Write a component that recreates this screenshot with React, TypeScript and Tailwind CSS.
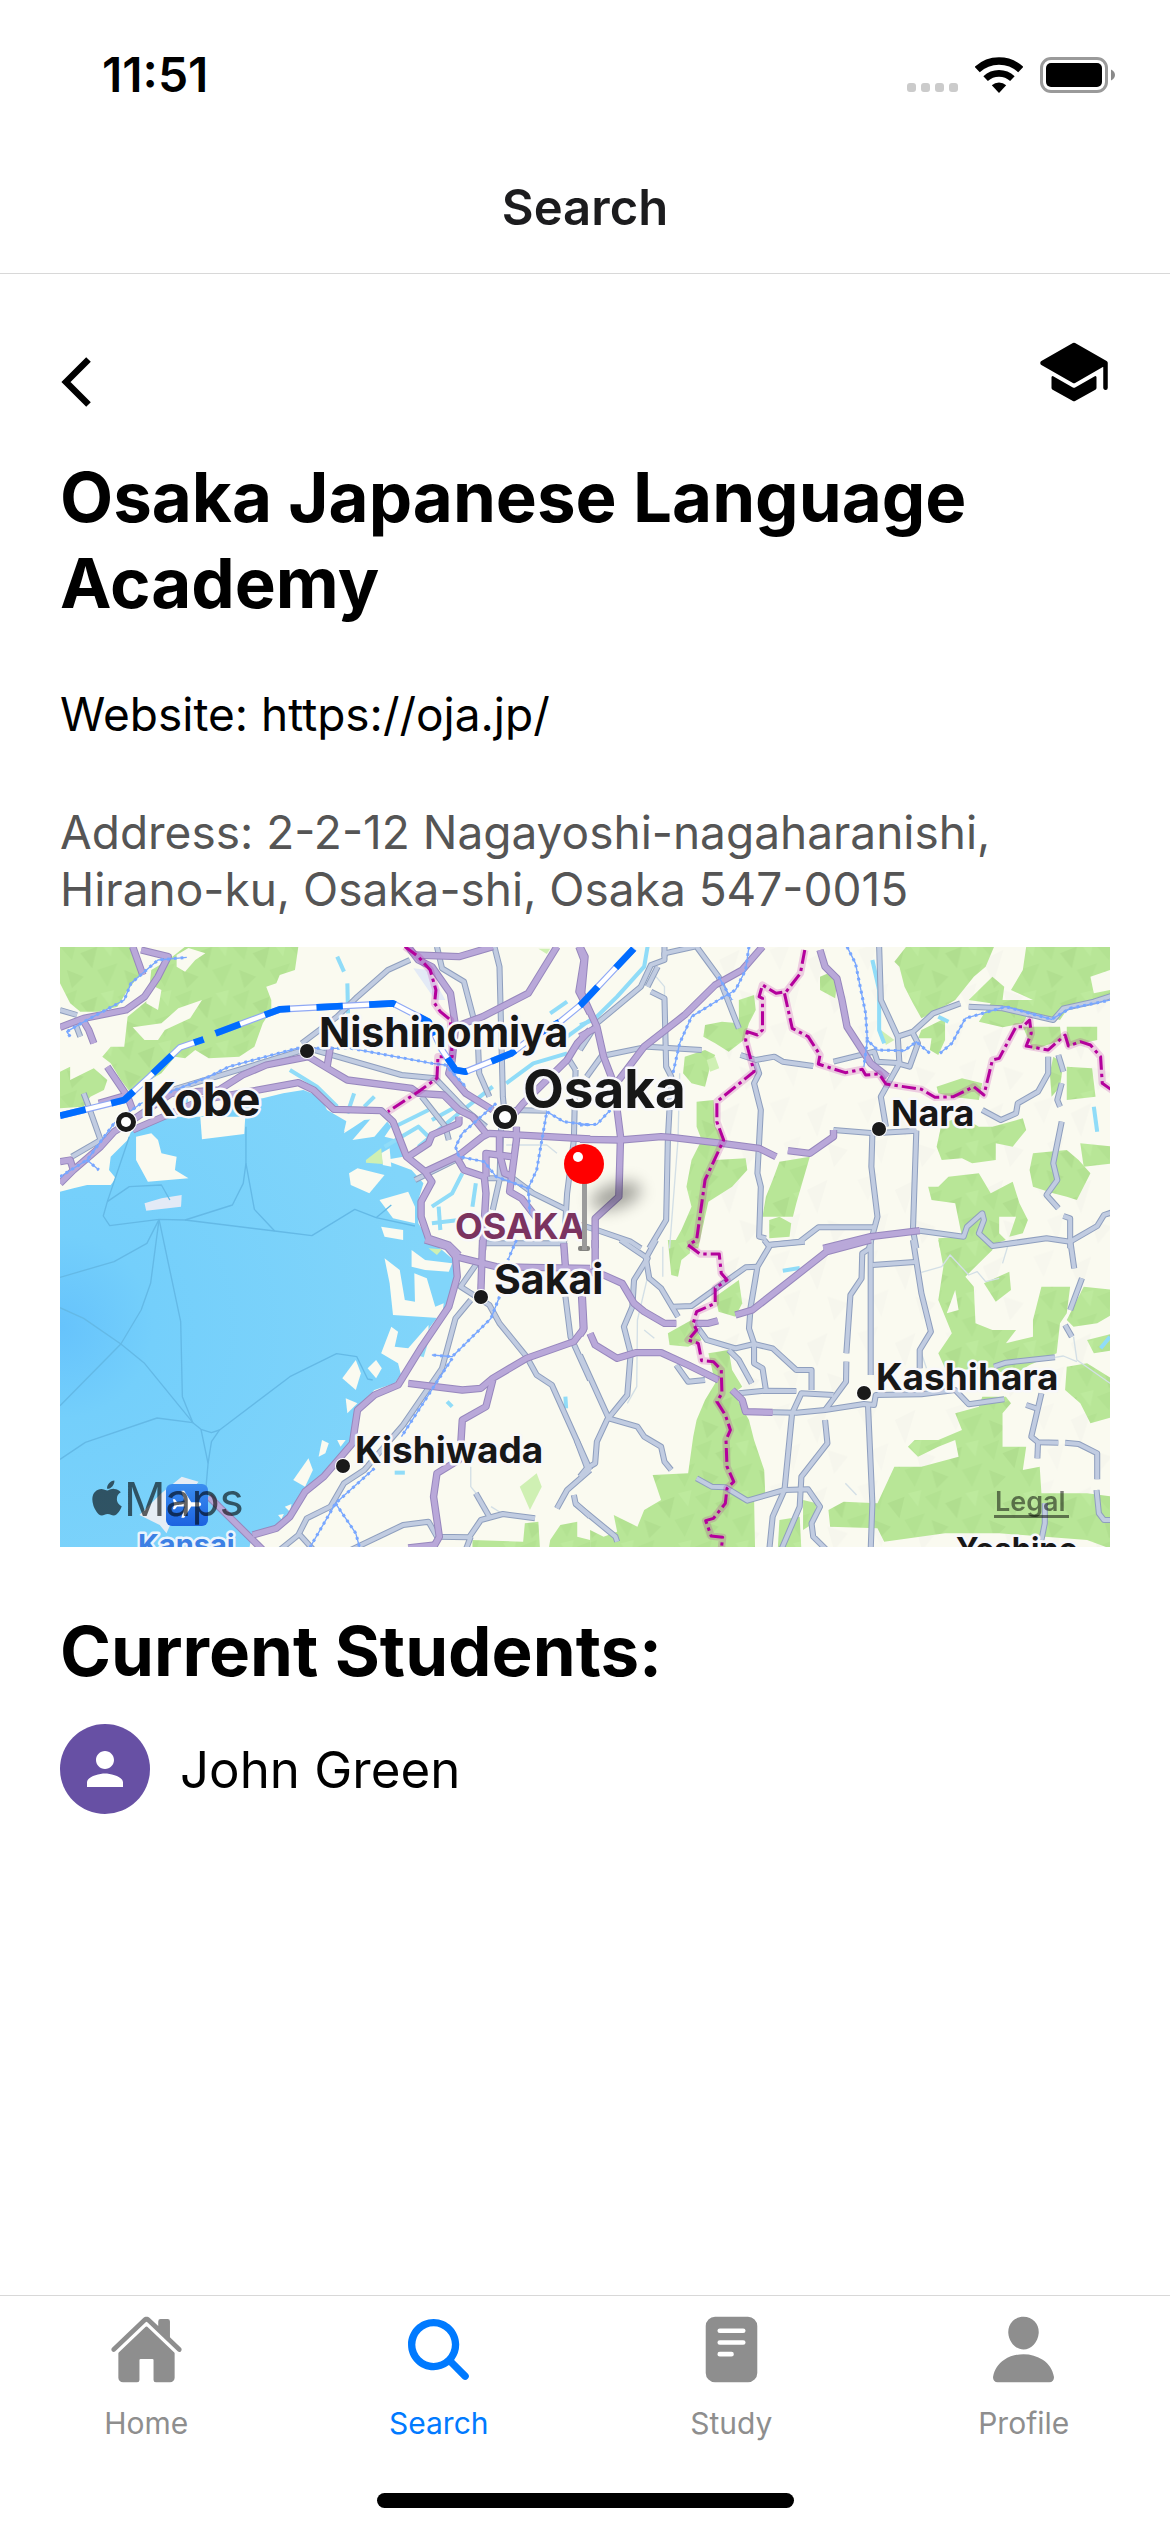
import React from "react";
import { IoHome, IoSearch, IoReader, IoPerson, IoSchool } from "react-icons/io5";
import { MdPerson, MdFlight } from "react-icons/md";
import { FaApple } from "react-icons/fa";

/* Map geometry is split in four tiles: nw, ne, sw, se. */
type Tile = "nw" | "ne" | "sw" | "se";
type Tiles = Record<Tile, string[]>;

const TILE_ORIGIN: Record<Tile, string> = {
  nw: "translate(0 0)",
  ne: "translate(1538 0)",
  sw: "translate(0 900)",
  se: "translate(1538 900)",
};
const TILES: Tile[] = ["nw", "ne", "sw", "se"];

const SEA =
  "0,755 40,745 80,735 150,735 165,715 145,690 150,650 200,600 210,575 300,530 415,530 480,510 530,480 600,475 660,460 720,450 770,470 790,510 850,545 840,580 870,560 900,540 960,535 980,560 960,590 1000,600 1015,650 960,660 1040,690 1075,730 1060,780 1060,850 1090,900 1130,930 1165,960 1170,1010 1140,1100 1095,1160 1060,1230 1010,1300 990,1330 930,1350 880,1400 870,1480 845,1530 800,1570 760,1640 720,1660 690,1720 640,1765 570,1780 560,1824 0,1824";

const WOODS: Tiles = {
  nw: [
    "0,20 215,20 240,100 200,150 170,200 110,215 60,215 30,190 0,130",
    "370,20 705,20 695,90 650,105 640,130 610,140 625,180 625,210 600,250 575,320 530,350 440,355 400,330 370,355 340,350 300,400 250,430 210,460 180,420 150,370 125,350 150,320 190,320 200,230 260,180 270,90 320,60",
    "0,395 30,380 30,420 70,400 100,385 140,420 130,450 90,470 70,500 0,505",
  ],
  ne: [
    "930,65 965,20 1225,20 1200,80 1165,110 1110,180 1060,210 1010,235 985,190 960,140 945,80",
    "1320,20 1580,20 1580,160 1510,190 1440,210 1420,240 1330,215 1310,250 1250,262 1180,245 1215,190 1150,180 1220,110 1255,140 1250,180 1340,180 1275,150 1310,90",
    "470,180 515,165 520,210 500,250 485,300 440,335 400,310 365,290 370,255 420,245 470,250",
    "710,110 745,95 760,130 755,175 710,150",
    "310,350 370,330 400,345 385,380 370,440 330,430 305,400",
    "345,485 395,480 400,560 430,600 400,660 490,655 495,690 450,740 380,785 370,830 350,925 270,925 300,870 330,800 315,740 330,660 360,600 345,560",
    "590,665 680,650 660,720 640,790 630,830 560,830 540,830 550,770 570,720",
    "560,840 590,830 625,850 620,890 560,895",
    "1070,550 1130,530 1180,560 1220,560 1310,535 1320,570 1280,620 1230,610 1230,660 1160,670 1130,655 1070,660 1055,620",
    "1030,740 1060,740 1090,710 1180,700 1215,760 1280,725 1300,790 1325,840 1310,880 1270,890 1290,830 1240,830 1240,880 1260,900 1190,925 1065,925 1060,895 1130,890 1120,840 1110,790 1040,780",
    "1055,440 1130,415 1190,430 1180,480 1100,470 1060,460",
    "1340,640 1440,630 1475,660 1510,700 1470,780 1440,770 1400,760 1340,740 1330,690",
    "1480,610 1580,620 1580,670 1490,680",
    "1440,380 1515,385 1525,470 1440,480",
    "1400,350 1430,370 1420,440 1395,470 1390,400",
    "1010,270 1080,235 1080,300 1060,345 1035,330 1040,295 1000,295",
    "1310,260 1420,260 1425,300 1340,330",
    "1440,260 1530,260 1530,300 1440,320",
  ],
  sw: [
    "1220,900 1370,905 1375,850 1415,845 1420,930 1220,930",
    "1450,900 1480,855 1530,845 1530,890 1568,900 1568,930 1445,930",
  ],
  se: [
    "260,0 325,0 325,40 300,60 290,110 270,105",
    "400,170 470,120 480,190 460,230 410,215",
    "380,340 440,330 450,390 480,440 455,460 500,540 515,600 545,690 548,760 515,770 518,930 30,930 30,870 70,890 110,875 100,825 170,860 190,810 240,780 215,705 320,700 335,590 345,540 370,480 400,430",
    "1060,0 1225,0 1220,30 1140,110 1165,140 1170,250 1220,270 1290,270 1260,310 1340,290 1340,240 1365,140 1450,140 1440,220 1420,250 1410,340 1330,375 1290,400 1170,390 1080,385 1060,340 1100,280 1060,180 1075,80",
    "1195,130 1270,95 1275,150 1230,185",
    "1490,140 1580,150 1580,220 1530,250 1460,260 1440,240",
    "1500,300 1580,280 1580,330 1520,340",
    "1440,380 1500,370 1580,420 1580,530 1510,550 1480,490 1435,450",
    "1110,520 1180,500 1190,470 1260,470 1275,490 1250,520 1250,620 1320,620 1310,690 1360,680 1365,760 1500,760 1580,770 1580,930 1500,900 1240,880 1080,880 900,905 880,865 740,860 735,810 780,785 880,790 930,680 1010,680 1120,650 1110,600 1060,620 1000,650 970,620 990,600 1060,600 1130,570",
    "590,840 650,830 655,930 585,930",
    "660,780 700,790 690,850 660,870",
    "260,280 330,240 360,300 320,320 265,315",
  ],
};

const CLEARINGS: Tiles = {
  nw: [
    "215,262 300,250 350,205 420,180 385,235 310,270 290,300 250,300",
    "260,130 300,150 290,210 255,190",
    "345,45 380,24 430,40 400,60 370,95 345,80",
    "225,590 270,580 290,600 300,640 345,650 340,690 380,715 260,725 225,660",
    "415,530 548,530 545,582 420,598",
    "855,700 880,685 960,705 915,760 860,735",
    "950,860 1015,870 1015,900 960,890",
    "945,780 1030,755 1050,800 1050,850 985,835",
    "865,600 950,500 980,530 930,590",
    "840,575 850,530 880,500 890,520",
    "950,640 975,625 980,680 955,675",
  ],
  ne: ["1510,110 1568,90 1568,150 1520,160"],
  sw: [
    "960,55 1005,90 1020,180 1050,185 1048,100 1085,115 1110,200 1135,190 1130,235 985,225 975,130",
    "1040,30 1080,60 1160,70 1150,95 1080,90 1040,80",
    "980,260 1000,275 990,320 1030,325 1090,255 1090,290 1050,360 1010,410 1000,370 950,340",
    "835,415 875,360 890,400 875,450",
    "910,385 935,360 952,385 935,415",
    "845,475 880,490 850,520",
    "765,650 775,600 795,610 785,640",
    "690,720 735,655 748,690 725,740",
    "665,800 685,792 680,815",
    "645,825 662,822 655,838",
    "820,600 845,600 830,620",
  ],
  se: ["1085,220 1110,150 1120,210"],
};

const PARKS: Tiles = {
  nw: ["905,660 950,625 955,672 905,668", "1415,26 1450,26 1440,42"],
  ne: ["375,360 400,350 412,385 385,395", "890,270 930,300 905,315"],
  sw: ["1360,740 1410,700 1425,740 1390,810", "1090,25 1130,28 1115,45"],
  se: [],
};

const CANALS: Tiles = {
  nw: [
    "1060,620 1180,520 1280,440",
    "1100,540 1190,490",
    "1320,430 1400,370 1500,340",
    "960,620 1060,560 1100,600",
    "1100,800 1160,760 1190,700",
    "1230,730 1220,800",
    "1100,850 1180,840",
    "820,50 840,95",
    "850,130 852,220",
    "990,560 1090,510",
    "1450,220 1500,185",
    "870,460 850,520",
    "930,470 900,500",
    "680,390 760,440 820,500",
    "1500,290 1568,240",
    "370,450 375,500",
    "1120,800 1125,870",
  ],
  ne: ["200,20 190,80 110,170 40,240 0,255", "865,60 885,150 885,270 900,310", "1520,500 1530,575", "1060,230 1090,245"],
  sw: ["1145,485 1160,500", "990,698 1020,698", "1495,470 1497,505", "1085,300 1070,350"],
  se: ["600,92 650,84", "1540,325 1568,290"],
};

const FERRIES: Tiles = {
  nw: [
    "205,590 140,785 128,828 147,857 293,838 370,840 510,795 542,730 550,670 550,560",
    "140,785 205,740 300,735 325,780",
    "370,840 635,873 745,887 872,808 935,833 1050,858",
    "550,670 575,808 635,873",
    "935,833 980,795",
    "293,838 257,910 160,965 0,1012",
    "293,838 268,1030 240,1110 180,1212 0,1397",
    "293,838 357,1145 362,1370 393,1448 417,1468 448,1478 472,1470 680,1310 818,1241 878,1250 910,1317 925,1320",
    "0,1103 70,1135 180,1212 250,1270 393,1448 287,1434 75,1507 0,1558",
    "417,1468 438,1570 432,1640",
    "472,1470 448,1505 438,1570",
  ],
  ne: [],
  sw: [],
  se: [],
};

const HIGHWAYS: Tiles = {
  nw: [
    "215,20 245,105",
    "240,30 320,50 290,110 250,170 195,210 70,235 0,262",
    "65,235 85,270 100,310",
    "140,380 200,470 215,510",
    "115,490 200,465",
    "0,665 30,660 40,690",
    "0,730 40,690 120,620 160,575 215,540 330,460 470,450 540,405 610,375 735,350 800,390 850,420 1040,445 1060,460 1135,465 1180,510 1220,530 1260,580",
    "215,570 420,480 560,455 705,428 750,450 810,508 950,512 985,545 1025,650 1080,695 1100,725 1068,785 1068,830 1090,895 1150,915 1180,945",
    "1030,650 1090,610 1100,585 1180,550 1180,530",
    "1080,695 1175,650 1250,590 1270,580 1568,597",
    "1175,655 1195,690 1255,710 1260,760 1250,930",
    "1260,710 1260,640 1335,650",
    "1300,580 1300,640 1315,700 1340,710",
    "1350,560 1350,600 1330,755 1365,775 1430,860",
    "1030,20 1060,60 1100,80 1155,160 1170,260 1160,360 1150,400 1200,460 1280,510",
    "1050,45 1180,50 1280,20",
    "1470,20 1385,160 1250,230 1170,260",
    "1535,20 1550,60 1535,155 1568,220",
    "1568,270 1530,310 1500,360 1370,490 1345,520",
    "790,380 800,320",
  ],
  ne: [
    "0,20 15,50 5,160 50,260 70,350 100,430 120,590 115,770 45,835 45,925",
    "540,20 480,90 400,135 310,225 190,320 115,420",
    "0,290 45,265",
    "710,30 725,80 760,115 775,180 790,260 860,370 910,410",
    "0,598 120,600 240,590 270,592 420,610 530,625 580,650",
    "615,632 680,640 750,590 750,570",
    "720,925 860,890 1005,872",
  ],
  sw: [
    "1080,0 1145,20 1170,50 1290,80 1390,82 1568,85",
    "1170,50 1175,110 1150,200 1070,320 1000,435 930,465 880,510 865,610 780,710 725,755 680,830 640,865 570,885",
    "1250,0 1245,150",
    "1490,10 1495,80",
    "1545,170 1550,265 1520,305 1380,355 1280,415 1245,445 1190,450 1030,430",
    "1280,420 1260,500 1190,540 1185,620 1180,660 1115,700 1105,770 1122,890 1100,930",
    "440,770 600,930",
    "1030,924 1110,915",
  ],
  se: [
    "45,0 45,90",
    "0,90 70,105 125,130 160,190 190,215 250,250 285,250",
    "5,170 10,270 0,285",
    "30,280 45,315 110,355 165,338 240,338 320,375 410,420",
    "340,250 380,250 408,242",
    "460,225 510,210 730,35 860,0",
    "450,450 480,480 490,515 570,517",
  ],
};

const ROADS: Tiles = {
  nw: [
    "715,310 820,230 880,170 970,90 1035,60",
    "1115,20 1130,85 1195,125 1235,280 1240,400 1270,470",
    "1285,20 1300,80 1310,470 1315,520",
    "0,210 50,225",
    "45,250 60,290",
    "35,650 120,600 85,500 70,460",
    "330,450 560,380 735,325 1010,405 1110,415 1200,510 1260,560",
    "1070,470 1140,560 1150,600",
    "1050,720 1190,650",
    "1305,560 1300,720 1280,810",
    "1260,715 1340,715 1400,760 1500,810",
    "1525,390 1520,600 1500,760 1490,925",
    "1250,910 1490,910",
    "1320,510 1440,512",
    "1500,350 1525,390",
  ],
  ne: [
    "0,330 50,250 180,140 210,75 250,60 250,40 340,20",
    "345,20 410,110 470,265",
    "210,155 250,175 255,380 270,410 260,600 255,840 205,925",
    "200,140 230,80",
    "250,20 250,50",
    "80,345 200,320 360,330",
    "20,410 70,340",
    "475,345 520,360 575,350 600,365 690,378",
    "750,365 870,335 880,365 950,370",
    "520,370 530,400 515,430 535,510 525,700 535,740 530,890 550,895",
    "885,20 890,180 940,290 945,370 890,470 905,560",
    "940,290 985,275 1045,220 1125,190",
    "1150,200 1250,205 1400,240 1430,205 1520,185 1580,165",
    "985,280 1000,310 975,380 940,370",
    "750,570 870,580 995,572",
    "865,580 862,680 880,830 855,925",
    "995,572 985,870 995,925",
    "1190,510 1245,540 1290,520 1295,490 1355,455 1385,400 1385,350",
    "1415,345 1430,395",
    "1425,430 1412,480 1420,500",
    "1425,545 1400,670 1412,720 1380,765 1415,805",
    "1430,828 1450,835 1450,925",
    "555,915 650,905 705,862 870,862",
    "1005,872 1135,890 1145,860 1190,820 1195,840 1180,880 1220,918 1380,895 1450,905 1530,858 1550,825 1580,815",
    "0,855 50,870 150,905 180,925",
  ],
  sw: [
    "1240,60 1185,140 1270,195 1300,250 1380,350 1410,405 1455,435 1568,690",
    "1215,180 1170,235 1130,385 1015,555 900,690 840,730 800,800 730,835 705,885 650,930",
    "1495,170 1510,290 1568,420",
    "710,885 750,930",
    "860,930 1015,855 1090,845 1115,890 1210,892 1245,840 1310,822 1405,835",
    "1230,760 1270,830",
    "1568,690 1500,750 1470,805",
    "1520,765 1525,790 1568,830",
    "1200,930 1215,890",
  ],
  se: [
    "120,0 200,55 160,120 155,200 130,260 150,340 140,465 80,540 50,605 45,670 20,685 0,710",
    "225,0 195,55 205,115 240,145 290,230",
    "0,345 85,535 170,560 190,590 240,620 250,665 270,690",
    "-15,790 105,890 110,905",
    "545,0 560,20 525,80 505,200 500,265 515,310 515,370 540,385 550,450",
    "560,15 665,5",
    "275,200 330,198 490,82 525,80",
    "350,265 375,300 460,325 515,312 570,325 640,390 685,390 685,450",
    "440,330 470,360 508,430",
    "470,460 550,452 640,453",
    "860,0 860,405",
    "858,25 835,40 833,115 800,165 788,340",
    "788,365 787,425 740,490 725,510",
    "630,515 655,460 750,465",
    "570,517 640,518 725,510 840,492 870,495 875,465 1010,463 1110,450 1150,493 1255,478",
    "865,75 1000,65",
    "985,0 1010,160 1038,275 1005,330 1005,385",
    "628,515 605,750 570,830 560,930",
    "725,540 732,610 655,710 650,800 595,930",
    "345,715 390,740 430,742 495,782 605,750 675,748 710,800 685,850 690,890 730,930",
    "852,495 865,790 860,930",
    "285,375 320,425 370,420",
    "1450,0 1462,85",
    "1485,115 1450,210",
    "1435,255 1455,290",
    "1225,380 1260,368 1405,352",
    "1365,460 1335,590 1355,607 1415,608",
    "1355,607 1353,655",
    "1320,495 1350,505",
    "1435,608 1475,612 1530,640 1530,718",
    "1528,750 1535,820 1550,840 1580,840",
    "1375,790 1375,850 1365,900",
    "-10,600 20,680",
  ],
};

const LANES: Tiles = {
  nw: ["1320,615 1440,615 1470,640"],
  ne: ["225,110 250,140 250,170", "295,400 290,600 265,925"],
  sw: ["1215,680 1215,740 1235,765", "1275,800 1310,822"],
  se: [
    "245,20 245,110",
    "205,90 170,240 168,440 140,490",
    "190,270 220,295",
    "1010,97 1070,80 1095,45 1150,105 1175,95 1200,125 1240,115",
    "1460,290 1470,360 1568,430",
    "1405,352 1430,348 1470,365",
    "785,730 818,765",
    "1265,20 1250,70",
    "1010,340 1025,385",
  ],
};

const BORDERS: Tiles = {
  nw: ["1020,20 1060,50 1095,90 1112,150 1108,190 1125,215 1155,240 1160,350 1118,350 1115,415 1060,455 970,515"],
  ne: [
    "665,30 652,100 610,155 580,160 540,135 530,170 540,175 540,270 525,285 495,275 490,300 515,395 405,485 405,545 425,600 370,720 345,900 320,915",
    "605,160 628,265 675,290 710,345 705,372 785,398 835,388 845,405 885,402 905,432 1010,448 1050,472 1105,470 1165,440 1195,465 1220,360 1240,355 1290,260 1310,260 1330,240 1335,280 1320,318 1385,330 1435,285 1445,318 1480,305 1510,315 1540,350 1545,430 1580,455",
  ],
  sw: [],
  se: [
    "320,15 355,42 412,42 418,100 435,120 400,145 400,190 345,215 335,250 345,270 320,300 350,310 360,362 395,365 418,390 420,460 405,485 430,525 445,570 432,600 435,680 455,725 435,745 430,790 395,835 372,842 388,888 422,892 418,930",
  ],
};

const BULLET_TRAIN: Tiles = {
  nw: [
    "0,527 110,500 190,480 265,410 355,322 425,298",
    "460,280 650,208 985,190 1090,245 1130,330 1170,390 1200,395 1335,340 1400,290 1480,245 1540,195 1698,25",
  ],
  ne: [],
  sw: [],
  se: [],
};

const RAILWAYS: Tiles = {
  nw: [
    "30,290 20,275 80,240 190,180 210,130 290,60 375,52",
    "0,710 80,660 160,550 240,490 440,410 500,380 700,325 860,325 1100,370 1140,375 1200,440",
    "80,660 115,690",
    "1290,490 1190,580 1170,620 1180,650 1255,665 1290,710 1385,745 1390,820",
    "1385,745 1410,690 1440,515 1490,545 1568,555",
  ],
  ne: [
    "500,20 490,90 460,150 410,180 330,230 295,310 275,400",
    "410,110 450,180",
    "0,555 50,553 90,510",
    "790,20 815,70 845,220 850,300 880,330 960,332 995,305 1035,340",
    "1065,340 1100,310 1140,235 1260,200 1395,238 1450,205 1580,178",
    "850,300 840,380",
  ],
  sw: [
    "1350,0 1325,60",
    "1300,170 1275,235 1160,350 1100,345",
    "1160,355 1010,590",
    "930,685 815,790 735,930",
    "815,790 875,880 888,930",
  ],
  se: [],
};

const CITIES = [
  { name: "Kobe", x: 82, y: 169, dotX: 66, dotY: 175, size: 47, major: true },
  { name: "Nishinomiya", x: 259, y: 100, dotX: 247, dotY: 104, size: 41, major: false },
  { name: "Osaka", x: 463, y: 161, dotX: 445, dotY: 170, size: 53, major: true },
  { name: "Nara", x: 831, y: 179, dotX: 819, dotY: 182, size: 36, major: false },
  { name: "Sakai", x: 434, y: 347, dotX: 421, dotY: 350, size: 41, major: false },
  { name: "Kishiwada", x: 295, y: 516, dotX: 283, dotY: 519, size: 37, major: false },
  { name: "Kashihara", x: 816, y: 443, dotX: 804, dotY: 446, size: 37, major: false },
];

function Areas({ data, fill }: { data: Tiles; fill: string }) {
  return (
    <>
      {TILES.map((t) => (
        <g key={t} transform={TILE_ORIGIN[t]} fill={fill}>
          {data[t].map((p) => (
            <polygon key={p} points={p} />
          ))}
        </g>
      ))}
    </>
  );
}

function Lines({
  data,
  color,
  width,
  dash,
  opacity,
}: {
  data: Tiles;
  color: string;
  width: number;
  dash?: string;
  opacity?: number;
}) {
  return (
    <>
      {TILES.map((t) => (
        <g
          key={t}
          transform={TILE_ORIGIN[t]}
          fill="none"
          stroke={color}
          strokeWidth={width}
          strokeDasharray={dash}
          strokeLinejoin="round"
          opacity={opacity}
        >
          {data[t].map((p) => (
            <polyline key={p} points={p} />
          ))}
        </g>
      ))}
    </>
  );
}

function OsakaMap() {
  return (
    <svg viewBox="0 0 1050 600" className="block w-full" fontFamily="Inter, 'Liberation Sans', sans-serif">
      <title>Map of Osaka</title>
      <defs>
        <radialGradient id="sea" gradientUnits="userSpaceOnUse" cx="0" cy="1160" r="1100">
          <stop offset="0" stopColor="#66c3fc" />
          <stop offset="0.25" stopColor="#74cffb" />
          <stop offset="1" stopColor="#81d5fa" />
        </radialGradient>
        <linearGradient id="airport" x1="0" y1="0" x2="0" y2="1">
          <stop offset="0" stopColor="#3b8ef0" />
          <stop offset="1" stopColor="#1c62e0" />
        </linearGradient>
        <pattern id="woods" width="170" height="150" patternUnits="userSpaceOnUse">
          <rect width="170" height="150" fill="#b8e697" />
          <polygon points="0,20 50,0 35,60" fill="#b3e292" />
          <polygon points="60,40 110,20 95,85" fill="#b0de8f" />
          <polygon points="110,90 170,70 140,140" fill="#b3e292" />
          <polygon points="20,90 70,110 35,145" fill="#b1df90" />
          <polygon points="120,10 160,0 150,50" fill="#bdea9d" />
        </pattern>
        <pattern id="hills" width="260" height="230" patternUnits="userSpaceOnUse">
          <rect width="260" height="230" fill="#fafaf0" />
          <polygon points="20,30 80,10 50,90" fill="#f7f7ee" />
          <polygon points="130,60 190,30 160,130" fill="#f6f6ed" />
          <polygon points="60,150 110,130 90,210" fill="#f7f7ee" />
          <polygon points="190,150 250,170 210,220" fill="#f6f6ed" />
        </pattern>
        <filter id="soft" x="-50%" y="-100%" width="200%" height="300%">
          <feGaussianBlur stdDeviation="8" />
        </filter>
      </defs>

      <g transform="translate(0 -7) scale(0.33807 0.33333)">
        <rect y="0" width="3200" height="1840" fill="#fafaf0" />
        <rect x="1950" width="1200" height="1840" fill="url(#hills)" />
        <polygon points={SEA} fill="url(#sea)" />
        <Areas data={WOODS} fill="url(#woods)" />
        <Areas data={CLEARINGS} fill="#fafaf0" />
        <polygon points="250,790 300,775 360,765 358,800 255,812" fill="#e3eaf6" />
        <polygon points="235,1725 300,1660 360,1610 410,1625 350,1700 315,1780 295,1755" fill="#e6edf5" />
        <polygon points="1045,85 1090,90 1140,180 1110,180" fill="#e3eaf6" />
        <Areas data={PARKS} fill="#cff0b3" />
        <Lines data={CANALS} color="#90dcf8" width={12} />
        <Lines data={FERRIES} color="#64b9e6" width={4} />
        <Lines data={LANES} color="#d3dfe6" width={4} />
        <Lines data={ROADS} color="#8f9fbe" width={18} />
        <Lines data={ROADS} color="#c1cce1" width={12} />
        <Lines data={HIGHWAYS} color="#9787bd" width={22} />
        <Lines data={HIGHWAYS} color="#b9a8d9" width={16} />
        <Lines data={RAILWAYS} color="#78a7ff" width={4} />
        <Lines data={RAILWAYS} color="#78a7ff" width={9} dash="8 12" />
        <Lines data={BORDERS} color="#b4009c" width={22} opacity={0.18} />
        <Lines data={BORDERS} color="#b4009c" width={9} dash="42 12 10 12" />
        <Lines data={BULLET_TRAIN} color="#8fa8f5" width={20} />
        <Lines data={BULLET_TRAIN} color="#ffffff" width={13} />
        <Lines data={BULLET_TRAIN} color="#006cff" width={20} dash="78 78" />
      </g>

      <ellipse cx="556" cy="249" rx="26" ry="12" fill="#000" opacity="0.35" filter="url(#soft)" transform="rotate(-18 556 249)" />

      <g fontWeight="700" strokeLinejoin="round" paintOrder="stroke">
        {CITIES.map((c) => (
          <g key={c.name}>
            <circle
              cx={c.dotX}
              cy={c.dotY}
              r={c.name === "Osaka" ? 12 : c.major ? 10 : 7}
              fill="#1a1a1a"
              stroke="#fff"
              strokeWidth="2"
            />
            {c.major && <circle cx={c.dotX} cy={c.dotY} r={c.name === "Osaka" ? 6 : 5} fill="#fff" />}
            <text x={c.x} y={c.y} fontSize={c.size} fill="#171717" stroke="#f8f8fb" strokeWidth="5">
              {c.name}
            </text>
          </g>
        ))}
        <text x="395" y="292" fontSize="36" fill="#7b3360" stroke="#f8f8fb" strokeWidth="5">
          OSAKA
        </text>
        <text x="78" y="608" fontSize="29" fill="#3c80e4" stroke="#eaf4fd" strokeWidth="5">
          Kansai
        </text>
        <text x="896" y="613" fontSize="31" fill="#171717" stroke="#f8f8fb" strokeWidth="5">
          Yoshino
        </text>
      </g>

      <rect x="106" y="537" width="42" height="42" rx="6" fill="url(#airport)" />
      <g transform="translate(110 541) rotate(90 17 17)">
        <MdFlight size={34} color="#fff" />
      </g>

      <g opacity="0.6">
        <g transform="translate(27 531)">
          <FaApple size={40} color="#000" />
        </g>
        <text x="64" y="569" fontSize="46" fill="#000">
          Maps
        </text>
      </g>
      <a href="#legal">
        <text x="935" y="564" fontSize="27" fontWeight="600" fill="#000" opacity="0.5">
          Legal
        </text>
        <rect x="934" y="568" width="75" height="3" fill="#000" opacity="0.5" />
      </a>

      <rect x="518" y="299" width="12" height="5" rx="2" fill="#333" opacity="0.6" />
      <rect x="522" y="234" width="5" height="69" fill="#9b9b9b" />
      <circle cx="524" cy="217" r="20" fill="#ff0000" />
      <circle cx="518" cy="210" r="5" fill="#fff" />
    </svg>
  );
}

function StatusBar() {
  return (
    <div className="flex h-[141px] items-center justify-between pt-2 pr-[54px] pl-[102px]">
      <span className="text-[48px] leading-none font-semibold">11:51</span>
      <div className="flex items-center">
        <div className="mt-[26px] mr-[17px] flex gap-[5px]">
          {[0, 1, 2, 3].map((i) => (
            <span key={i} className="size-[9px] rounded-[3px] bg-[#cbcbcb]" />
          ))}
        </div>
        <svg className="mr-[17px] h-9 w-12" viewBox="0 0 48 36" fill="none" stroke="#000" aria-label="Wi-Fi">
          <path d="M2.2 12.6A32 32 0 0 1 45.8 12.6" strokeWidth="7.5" />
          <path d="M10.6 21.7A19.6 19.6 0 0 1 37.4 21.7" strokeWidth="6.6" />
          <path d="M24 36L16.8 28.3A10.5 10.5 0 0 1 31.2 28.3Z" fill="#000" stroke="none" />
        </svg>
        <svg className="h-9 w-[76px]" viewBox="0 0 76 36" aria-label="Battery full">
          <rect x="1.5" y="1.5" width="65" height="33" rx="9.5" fill="none" stroke="#9a9a9a" strokeWidth="3" />
          <rect x="6" y="6" width="56" height="24" rx="5" fill="#000" />
          <path d="M71 12.5C73.4 13.4 75 15.5 75 18S73.4 22.6 71 23.5Z" fill="#8a8a8a" />
        </svg>
      </div>
    </div>
  );
}

const TABS = [
  { label: "Home", Icon: IoHome },
  { label: "Search", Icon: IoSearch },
  { label: "Study", Icon: IoReader },
  { label: "Profile", Icon: IoPerson },
];

function TabBar() {
  return (
    <footer className="border-t border-[#d8d8d8]">
      <nav className="grid grid-cols-4 pt-4">
        {TABS.map(({ label, Icon }) => (
          <button
            key={label}
            type="button"
            aria-current={label === "Search" ? "page" : undefined}
            className={`flex flex-col items-center gap-4 ${label === "Search" ? "text-[#007aff]" : "text-[#8e8e8e]"}`}
          >
            <Icon size={75} />
            <span className="text-[30px] leading-10">{label}</span>
          </button>
        ))}
      </nav>
      <div className="flex justify-center pt-[50px] pb-6">
        <div className="h-[15px] w-[417px] rounded-full bg-black" />
      </div>
    </footer>
  );
}

export default function App() {
  return (
    <div className="flex min-h-screen flex-col bg-white font-[Inter,'Liberation_Sans',sans-serif] text-black">
      <header className="border-b border-[#d8d8d8]">
        <StatusBar />
        <h1 className="flex h-[132px] items-center justify-center text-[49px] leading-none font-semibold text-[#1c1c1e]">
          Search
        </h1>
      </header>

      <main className="flex-1 px-[60px] pt-[62px]">
        <div className="flex h-[91px] items-start justify-between">
          <button type="button" aria-label="Back" className="mt-[20px] p-px">
            <svg className="h-[50px] w-[30px]" viewBox="0 0 30 50" fill="none" stroke="currentColor" strokeWidth="6.5">
              <path d="M27.5 2.5L5 25L27.5 47.5" />
            </svg>
          </button>
          <button type="button" aria-label="School">
            <IoSchool size={72} />
          </button>
        </div>

        <h2 className="mt-[27px] text-[69px] leading-[86px] font-bold">Osaka Japanese Language Academy</h2>
        <p className="mt-[60px] text-[46px] leading-[57px]">Website: https://oja.jp/</p>
        <p className="mt-[61px] text-[46px] leading-[57px] text-[#555]">
          Address: 2-2-12 Nagayoshi-nagaharanishi, Hirano-ku, Osaka-shi, Osaka 547-0015
        </p>

        <div className="mt-[29px]">
          <OsakaMap />
        </div>

        <h2 className="mt-[61px] text-[69px] leading-[86px] font-bold">Current Students:</h2>
        <ul className="mt-[30px]">
          <li className="flex items-center gap-[30px]">
            <span className="flex size-[90px] items-center justify-center rounded-full bg-[#6750a4] text-white">
              <MdPerson size={54} />
            </span>
            <span className="text-[51px] leading-none">John Green</span>
          </li>
        </ul>
      </main>

      <TabBar />
    </div>
  );
}
